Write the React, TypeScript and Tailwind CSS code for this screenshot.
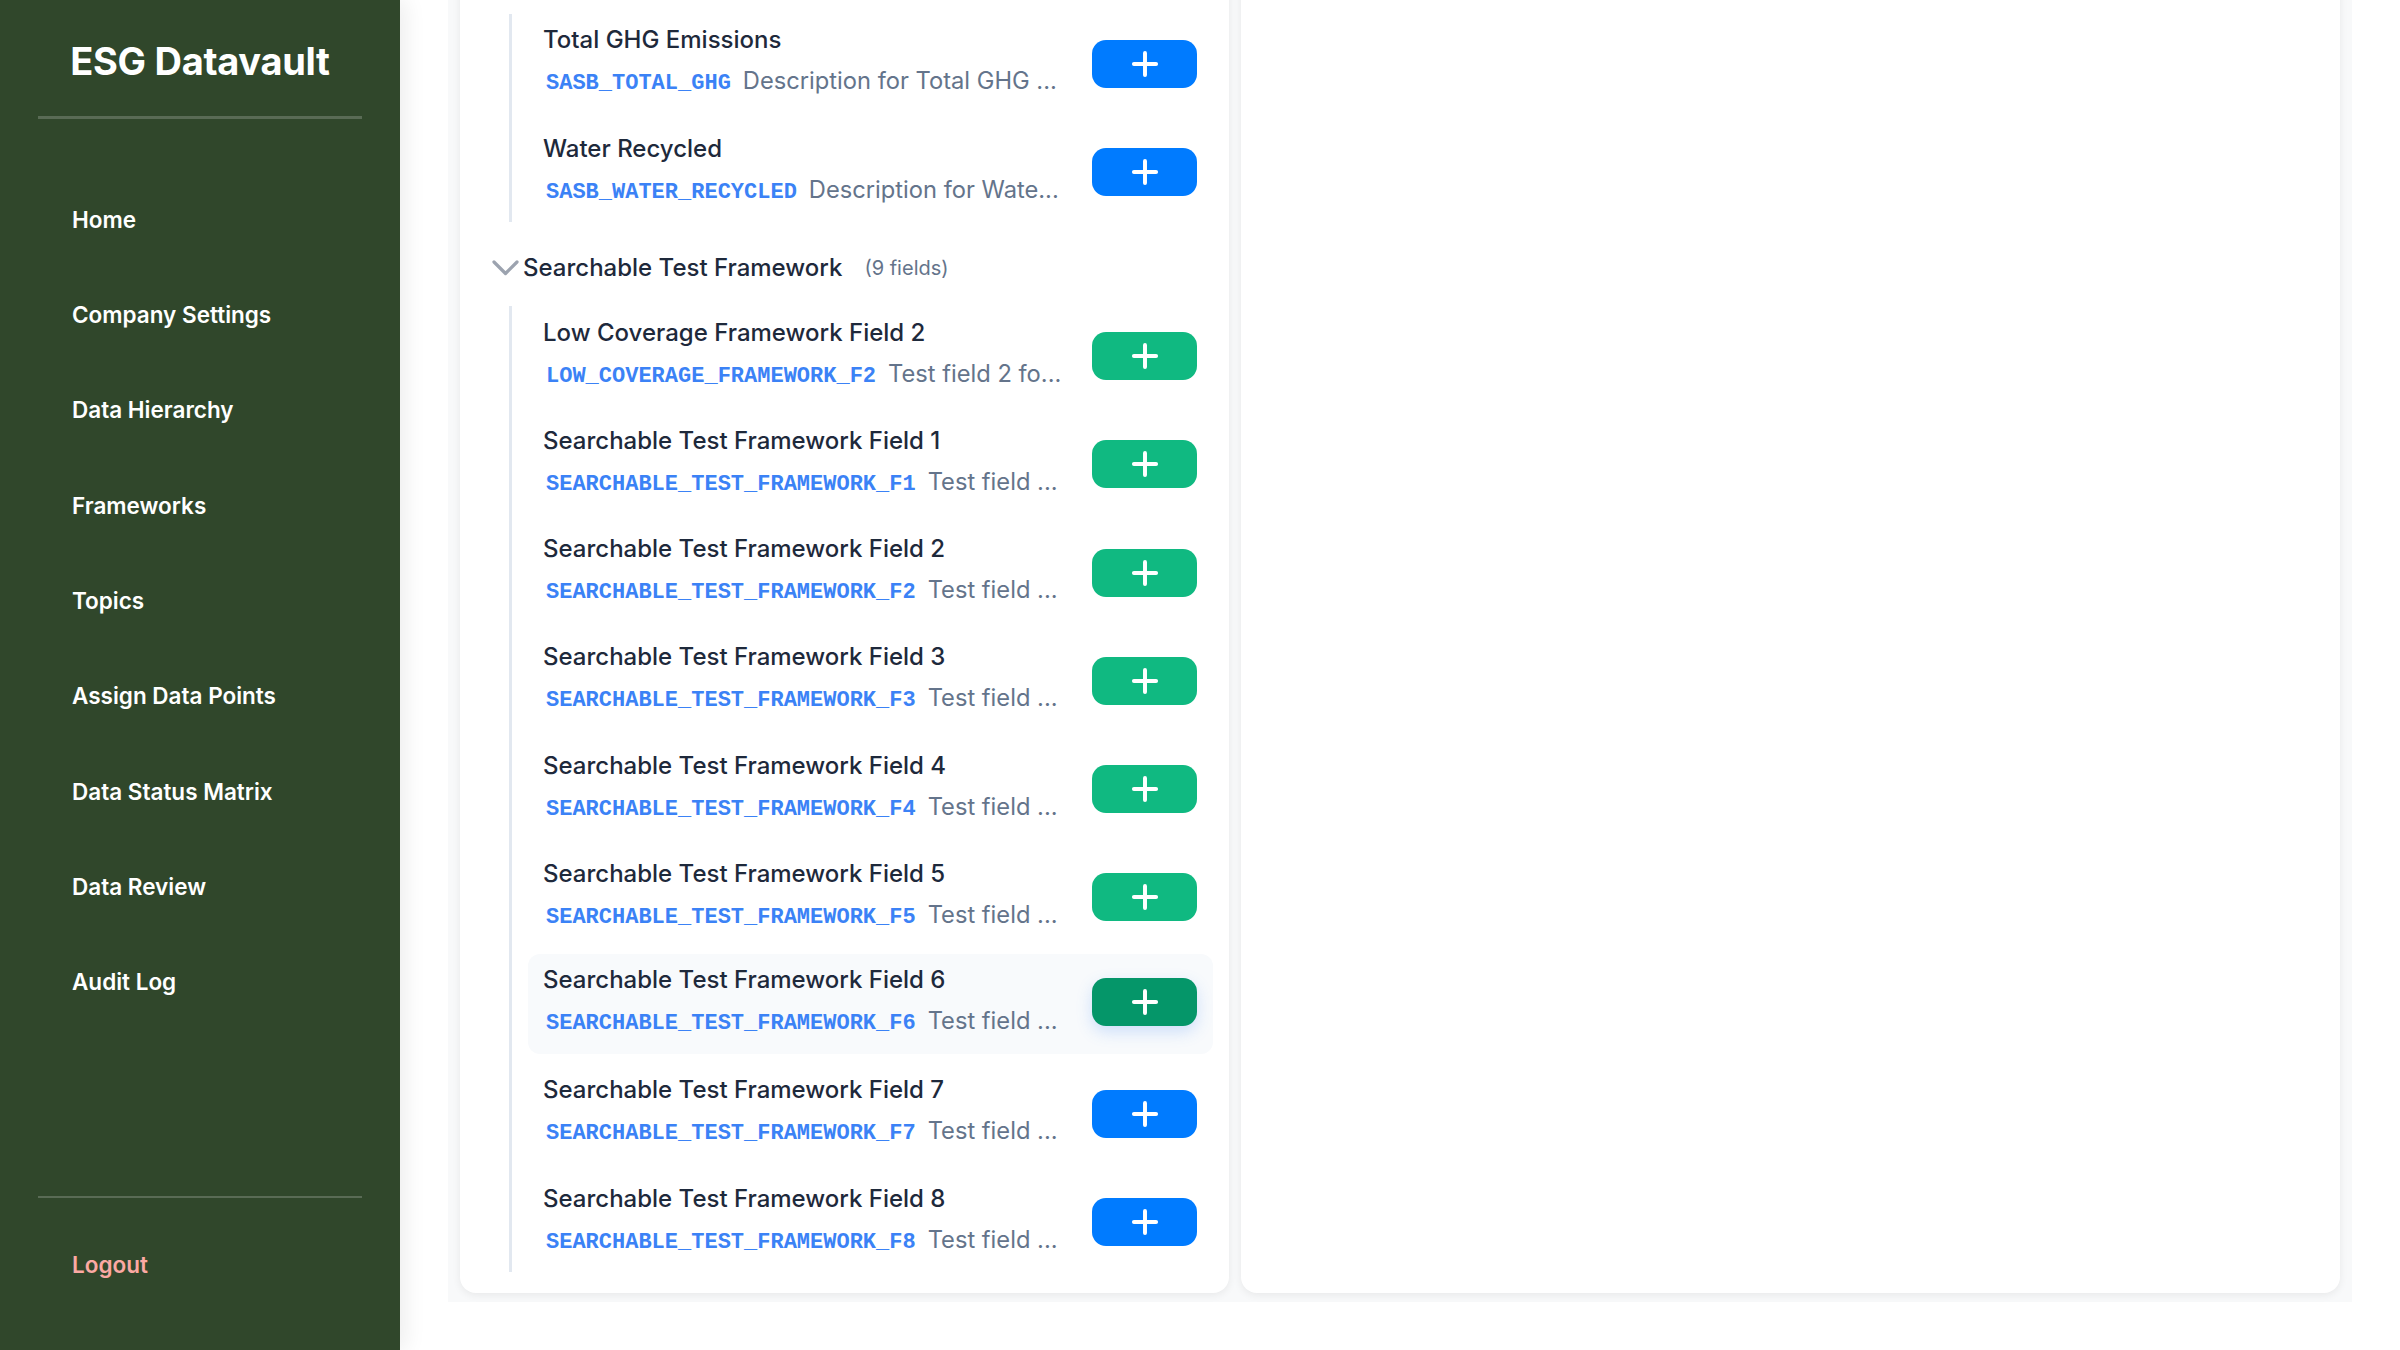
import { Plus } from "lucide-react";

interface Field {
  title: string;
  code: string;
  desc: string;
  assigned?: boolean;
  hover?: boolean;
}

interface Group {
  name: string;
  fields: Field[];
}

const navItems = [
  "Home",
  "Company Settings",
  "Data Hierarchy",
  "Frameworks",
  "Topics",
  "Assign Data Points",
  "Data Status Matrix",
  "Data Review",
  "Audit Log",
];

const groups: Group[] = [
  {
    name: "SASB",
    fields: [
      {
        title: "Total GHG Emissions",
        code: "SASB_TOTAL_GHG",
        desc: "Description for Total GHG ...",
      },
      {
        title: "Water Recycled",
        code: "SASB_WATER_RECYCLED",
        desc: "Description for Wate...",
      },
    ],
  },
  {
    name: "Searchable Test Framework",
    fields: [
      {
        title: "Low Coverage Framework Field 2",
        code: "LOW_COVERAGE_FRAMEWORK_F2",
        desc: "Test field 2 fo...",
        assigned: true,
      },
      ...[1, 2, 3, 4, 5, 6, 7, 8].map((n) => ({
        title: `Searchable Test Framework Field ${n}`,
        code: `SEARCHABLE_TEST_FRAMEWORK_F${n}`,
        desc: "Test field ...",
        assigned: n <= 6,
        hover: n === 6,
      })),
    ],
  },
];

function Chevron() {
  return (
    <svg width="27" height="16" viewBox="0 0 27 16" fill="none">
      <polyline
        points="2,2 13.5,13.5 25,2"
        stroke="#9ca3af"
        strokeWidth="3.2"
        strokeLinecap="round"
        strokeLinejoin="round"
      />
    </svg>
  );
}

function FieldRow({ field }: { field: Field }) {
  const btnColor = field.hover
    ? "bg-[#059669] shadow-[0_6px_16px_rgba(59,130,246,0.22)] -translate-y-[2px]"
    : field.assigned
    ? "bg-[#10b981]"
    : "bg-[#007bff]";

  return (
    <div
      className={`flex items-center h-[100px] pl-[15px] pr-[16px] gap-[29px] rounded-xl ${
        field.hover ? "bg-[#f8fafc] -translate-y-[2px]" : ""
      }`}
    >
      <div className="flex-1 min-w-0">
        <div className="text-[24px] leading-[26px] font-medium text-[#1e293b] truncate">
          {field.title}
        </div>
        <div className="mt-[12px] flex items-baseline leading-[32px] min-w-0">
          <span className="shrink-0 font-['Liberation_Mono',monospace] font-bold text-[22px] text-[#3b82f6] pl-[3px]">
            {field.code}
          </span>
          <span className="ml-[12px] text-[23.7px] text-[#64748b] truncate">
            {field.desc}
          </span>
        </div>
      </div>
      <button
        className={`w-[105px] h-[48px] rounded-[14px] flex items-center justify-center text-white shrink-0 ${btnColor}`}
      >
        <Plus size={38} strokeWidth={2.5} />
      </button>
    </div>
  );
}

export default function App() {
  return (
    <div className="flex h-screen w-full bg-white font-['Inter','Noto_Sans',sans-serif] overflow-hidden">
      <aside className="w-[400px] h-screen shrink-0 bg-[#30472b] flex flex-col relative z-10 shadow-[6px_0_20px_rgba(0,0,0,0.07)]">
        <div className="pt-[38px] text-[38px] leading-[46px] font-bold text-white text-center tracking-[-0.3px]">
          ESG Datavault
        </div>
        <div className="mx-[38px] mt-[32px] h-[3px] bg-white/20" />
        <nav className="mt-[53px] px-[38px] flex flex-col">
          {navItems.map((item) => (
            <a
              key={item}
              className="h-[95.3px] flex items-center px-[34px] text-[22.5px] font-semibold text-white"
            >
              {item}
            </a>
          ))}
        </nav>
        <div className="mt-auto px-[38px] pb-[37px]">
          <div className="h-[2px] bg-white/20" />
          <a className="mt-[20px] h-[95.3px] flex items-center px-[34px] text-[22.5px] font-semibold text-[#fba9a3]">
            Logout
          </a>
        </div>
      </aside>

      <main className="flex-1 h-screen overflow-hidden flex flex-col justify-end px-12 pb-12">
        <div className="shrink-0 bg-[#f8f9fa] pl-[12px] pr-[12px] pt-3 pb-[9px] flex gap-3 items-stretch">
          <div className="w-[769px] shrink-0 bg-white rounded-2xl shadow-[0_2px_8px_rgba(0,0,0,0.07)] pl-[32px] pr-[16px] pt-6 pb-[21px]">
            {groups.map((group, gi) => (
              <div key={group.name} className={gi > 0 ? "mt-4" : ""}>
                <div className="flex items-center h-[60px]">
                  <Chevron />
                  <span className="ml-[4px] text-[24px] font-medium text-[#1e293b]">
                    {group.name}
                  </span>
                  <span className="ml-[22px] text-[20px] text-[#64748b]">
                    ({group.fields.length} fields)
                  </span>
                </div>
                <div className="mt-2 ml-[17px] border-l-[3px] border-[#e2e8f0] pl-[16px] flex flex-col gap-[8.25px]">
                  {group.fields.map((f) => (
                    <FieldRow key={f.code} field={f} />
                  ))}
                </div>
              </div>
            ))}
          </div>
          <div className="flex-1 bg-white rounded-2xl shadow-[0_2px_8px_rgba(0,0,0,0.07)]" />
        </div>
      </main>
    </div>
  );
}
